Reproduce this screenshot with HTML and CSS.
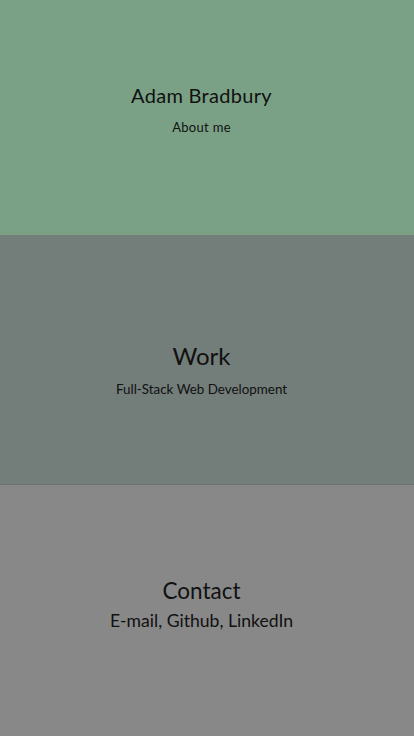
FILE: index.html
```html
<!DOCTYPE html>
<html lang="en">
<head>
<meta charset="utf-8">
<title>Adam Bradbury</title>
<link rel="stylesheet" href="styles.css">
</head>
<body>
<main class="page">
  <section class="panel panel-about">
    <h1 class="title title-name">Adam Bradbury</h1>
    <p class="sub sub-about">About me</p>
  </section>
  <section class="panel panel-work">
    <h2 class="title title-big">Work</h2>
    <p class="sub sub-work">Full-Stack Web Development</p>
  </section>
  <section class="panel panel-contact">
    <h2 class="title title-big title-contact">Contact</h2>
    <p class="sub sub-contact">E-mail, Github, LinkedIn</p>
  </section>
</main>
</body>
</html>
```
FILE: styles.css
```css
* { box-sizing: border-box; }
html, body { margin: 0; padding: 0; }
body {
  font-family: Lato, "Open Sans", sans-serif;
  color: #111;
  background: #888888;
}
.page { display: flex; flex-direction: column; min-height: 736px; }
.panel {
  display: flex;
  flex-direction: column;
  align-items: center;
  padding-right: 11px;
}
.panel-about { background: #7aa186; height: 236px; padding-top: 83px; border-bottom: 1px solid #767e78; }
.panel-work { background: #737d7a; height: 249px; padding-top: 105px; border-bottom: 1px solid #6c7370; }
.panel-contact { background: #888888; flex: 1; padding-top: 91px; }
.title { margin: 0; font-weight: 400; }
.title-name { font-size: 20px; line-height: 24px; letter-spacing: 0.3px; }
.title-big { font-size: 24px; line-height: 30px; }
.title-contact { font-size: 22.5px; }
.sub { margin: 0; }
.sub-about { font-size: 13px; margin-top: 12px; letter-spacing: 0.3px; }
.sub-work { font-size: 13.4px; margin-top: 10px; }
.sub-contact { font-size: 17.6px; margin-top: 4px; }
```
